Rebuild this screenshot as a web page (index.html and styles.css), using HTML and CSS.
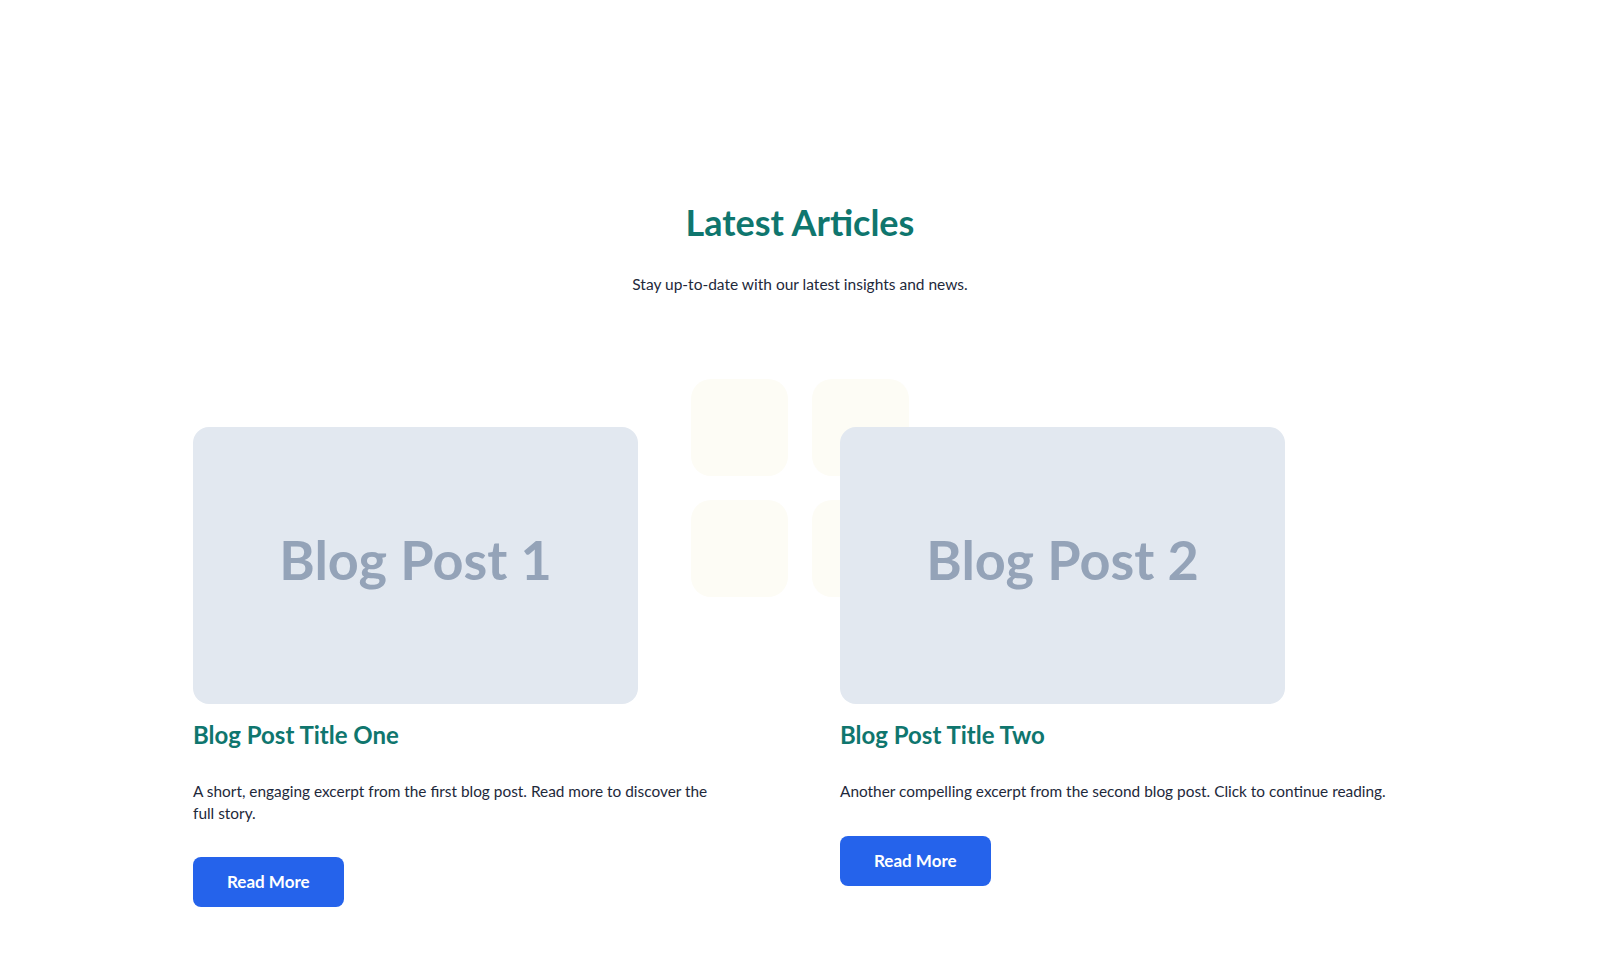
FILE: index.html
```html
<!DOCTYPE html>
<html lang="en">
<head>
<meta charset="utf-8">
<title>Latest Articles</title>
<link rel="stylesheet" href="styles.css">
</head>
<body>
<section class="articles">
  <header class="articles-header">
    <h2 class="articles-title">Latest Articles</h2>
    <p class="articles-subtitle">Stay up-to-date with our latest insights and news.</p>
  </header>
  <div class="articles-grid">
    <div class="decor" aria-hidden="true">
      <span class="decor-tile"></span>
      <span class="decor-tile"></span>
      <span class="decor-tile"></span>
      <span class="decor-tile"></span>
    </div>
    <article class="card">
      <div class="card-image"><span>Blog Post 1</span></div>
      <h3 class="card-title">Blog Post Title One</h3>
      <p class="card-excerpt card-excerpt--narrow">A short, engaging excerpt from the first blog post. Read more to discover the full story.</p>
      <a class="card-button" href="#">Read More</a>
    </article>
    <article class="card">
      <div class="card-image"><span>Blog Post 2</span></div>
      <h3 class="card-title">Blog Post Title Two</h3>
      <p class="card-excerpt">Another compelling excerpt from the second blog post. Click to continue reading.</p>
      <a class="card-button" href="#">Read More</a>
    </article>
  </div>
</section>
</body>
</html>
```
FILE: styles.css
```css
* { box-sizing: border-box; }

body {
  margin: 0;
  background: #ffffff;
  font-family: "Lato", "Noto Sans", sans-serif;
  color: #1e293b;
}

.articles {
  padding: 202px 0 80px;
}

.articles-header {
  text-align: center;
}

.articles-title {
  margin: 0;
  font-size: 36px;
  line-height: 40px;
  font-weight: 700;
  color: #0f766e;
}

.articles-subtitle {
  margin: 30px 0 0;
  font-size: 15.5px;
  line-height: 24px;
  color: #1e293b;
}

.articles-grid {
  position: relative;
  display: grid;
  grid-template-columns: 567px 567px;
  justify-content: center;
  column-gap: 80px;
  margin-top: 131px;
}

.decor {
  position: absolute;
  top: -48px;
  left: 50%;
  transform: translateX(-50%);
  display: grid;
  grid-template-columns: 97px 97px;
  grid-auto-rows: 97px;
  gap: 24px;
  z-index: 0;
}

.decor-tile {
  display: block;
  border-radius: 20px;
  background: #fdfcf5;
}

.card {
  position: relative;
  z-index: 1;
  display: flex;
  flex-direction: column;
  align-items: flex-start;
}

.card-image {
  width: 445px;
  height: 277px;
  padding-bottom: 12px;
  border-radius: 16px;
  background: #e2e8f0;
  display: flex;
  align-items: center;
  justify-content: center;
}

.card-image span {
  font-family: "Lato", sans-serif;
  font-weight: 700;
  font-size: 54px;
  color: #94a3b8;
}

.card-title {
  margin: 15px 0 0;
  font-size: 24px;
  line-height: 32px;
  font-weight: 700;
  color: #0f766e;
}

.card-excerpt {
  margin: 30px 0 0;
  font-size: 15.4px;
  line-height: 21.5px;
  color: #1e293b;
}

.card-excerpt--narrow {
  max-width: 530px;
}

.card-button {
  margin-top: 33px;
  display: inline-block;
  padding: 14px 34px;
  font-size: 17px;
  line-height: 22px;
  font-weight: 700;
  color: #ffffff;
  background: #2563eb;
  border-radius: 8px;
  text-decoration: none;
}
```
